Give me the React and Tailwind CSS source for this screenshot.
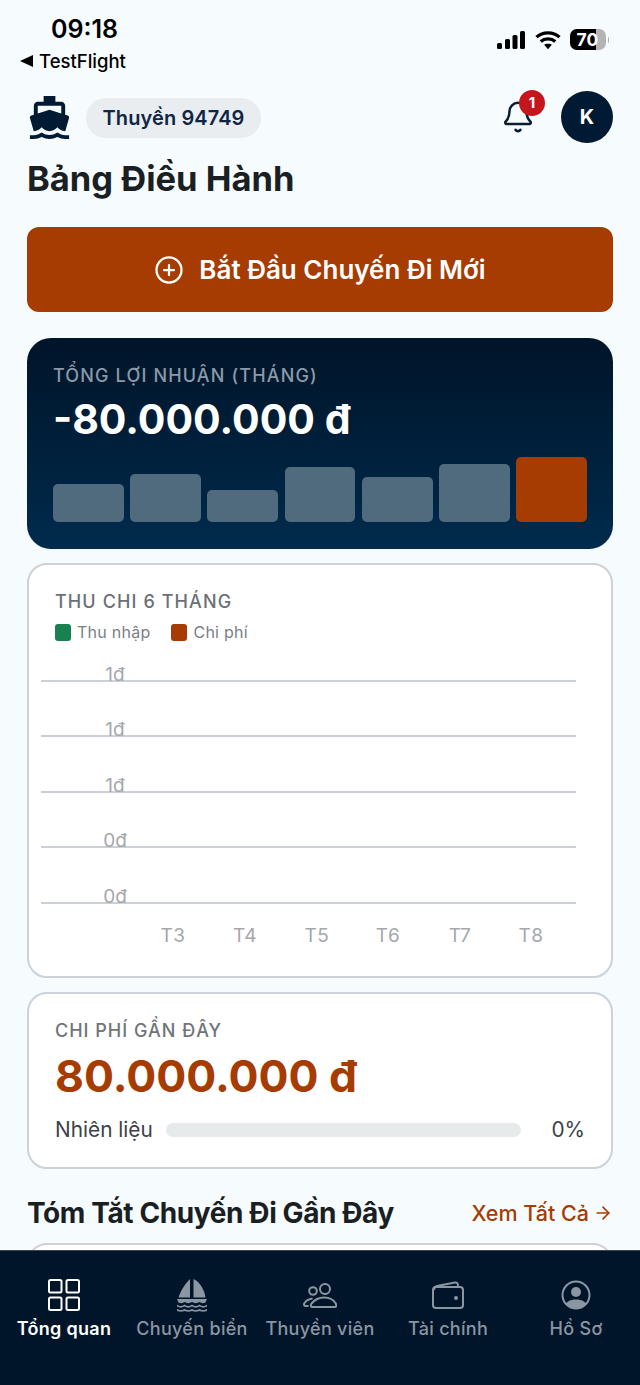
import React from "react";
import { MdDirectionsBoat } from "react-icons/md";
import { Bell, CirclePlus, ArrowRight } from "lucide-react";

const FONT = "font-['Inter','Noto_Sans',sans-serif]";
const bars = [38, 48, 32, 55, 45, 58];
const gridY = [
  { y: 21, l: "1đ" },
  { y: 76, l: "1đ" },
  { y: 132, l: "1đ" },
  { y: 187, l: "0đ" },
  { y: 243, l: "0đ" },
];
const months = [
  ["T3", 172],
  ["T4", 244],
  ["T5", 316],
  ["T6", 387],
  ["T7", 459],
  ["T8", 530],
];

function StatusIcons() {
  return (
    <div className="flex items-center">
      <svg width="28" height="18" viewBox="0 0 28 18" fill="#000" className="mt-[1px]">
        <rect x="0" y="12" width="5" height="6" rx="1.5" />
        <rect x="8" y="8" width="5" height="10" rx="1.5" />
        <rect x="15.500" y="4" width="5" height="14" rx="1.5" />
        <rect x="23" y="0" width="5" height="18" rx="1.5" />
      </svg>
      <svg width="26" height="20" viewBox="0 0 27 20" fill="none" stroke="#000" strokeWidth="3.4" className="ml-[10px]">
        <path d="M1.5 7 C8 1 19 1 25.5 7" />
        <path d="M6 11.5 C10 8 17 8 21 11.5" />
        <path d="M13.5 19.5 L9.5 15 C11.5 13.6 15.5 13.6 17.5 15 Z" fill="#000" stroke="none" />
      </svg>
      <div className="relative ml-[9px] flex h-[21px] w-[36px] overflow-hidden rounded-[7px] bg-[#b4b4b4]">
        <div className="h-full w-[26px] bg-black" />
        <span className="absolute left-[7px] top-0 text-[17.500px] font-bold leading-[21px] text-white">70</span>
      </div>
      <div className="ml-[2px] h-[6px] w-[1.5px] rounded-r-sm bg-[#b4b4b4]" />
    </div>
  );
}

function SailIcon() {
  return (
    <svg width="32" height="34" viewBox="0 0 32 34" fill="#8b96a3">
      <path d="M14 1 V19.500 H2.500 C4.500 13 9 6 14 1 Z" />
      <path d="M17.500 1 C24 4 28.500 12 29.500 19.500 H17.500 Z" />
      <path d="M1 21 H31 L29.500 24.500 C27.500 25.500 26 25.500 23.500 24 C21 25.500 18.500 25.500 16 24 C13.500 25.500 11 25.500 8.500 24 C6 25.500 4.500 25.500 2.500 24.500 Z" />
      <path d="M1 26.500 C4 28.500 6 28.500 8.500 26.500 C11 28.500 13.500 28.500 16 26.500 C18.500 28.500 21 28.500 23.500 26.500 C26 28.500 28 28.500 31 26.500 V28.500 C28 30 26 30 23.500 28.500 C21 30 18.500 30 16 28.500 C13.500 30 11 30 8.500 28.500 C6 30 4 30 1 28.500 Z" />
      <path d="M1 31 C4 32.500 6 32.500 8.500 31 C11 32.500 13.500 32.500 16 31 C18.500 32.500 21 32.500 23.500 31 C26 32.500 28 32.500 31 31 V33 C28 34 26 34 23.500 33 C21 34 18.500 34 16 33 C13.500 34 11 34 8.500 33 C6 34 4 34 1 33 Z" />
    </svg>
  );
}

function GridIcon() {
  return (
    <svg width="32" height="32" viewBox="0 0 32 32" fill="none" stroke="#fff" strokeWidth="2">
      <rect x="1" y="1" width="12.500" height="12.500" rx="1.500" />
      <rect x="18.500" y="1" width="12.500" height="12.500" rx="1.500" />
      <rect x="1" y="18.500" width="12.500" height="12.500" rx="1.500" />
      <rect x="18.500" y="18.500" width="12.500" height="12.500" rx="1.500" />
    </svg>
  );
}

function CrewIcon() {
  return (
    <svg width="34" height="25" viewBox="0 0 34 25" fill="none" stroke="#8b96a3" strokeWidth="2">
      <circle cx="22" cy="6" r="5" />
      <circle cx="10" cy="8" r="3.800" />
      <path d="M9 24 H32 C33.500 24 33.500 22 32.800 20.500 C30.500 16.500 26 14.500 21 14.500 C16 14.500 11.500 17 8.500 20.500 C7.500 22 7.500 24 9 24 Z" />
      <path d="M5.500 23 H3 C1 23 .5 21.500 1.500 20 C3 17.500 6 16 9.500 15.500" />
    </svg>
  );
}

function WalletIcon() {
  return (
    <svg width="32" height="28" viewBox="0 0 32 28" fill="none" stroke="#8b96a3" strokeWidth="2">
      <path d="M2 9 C2 6.500 3 5.500 5 5 L23 1.500 C25 1.200 26 2.500 26 5" />
      <rect x="1" y="6" width="30" height="21" rx="3" />
      <circle cx="24" cy="17" r="2" fill="#8b96a3" stroke="none" />
    </svg>
  );
}

function ProfileIcon() {
  return (
    <svg width="30" height="30" viewBox="0 0 30 30" fill="none">
      <defs>
        <clipPath id="profile-clip">
          <circle cx="15" cy="15" r="13.500" />
        </clipPath>
      </defs>
      <circle cx="15" cy="12" r="5" fill="#8b96a3" />
      <path d="M3 30 C3 22 9 19.500 15 19.500 C21 19.500 27 22 27 30 Z" fill="#8b96a3" clipPath="url(#profile-clip)" />
      <circle cx="15" cy="15" r="13.500" stroke="#8b96a3" strokeWidth="2" />
    </svg>
  );
}

const navItems = [
  { label: "Tổng quan", icon: <GridIcon />, active: true },
  { label: "Chuyến biển", icon: <SailIcon /> },
  { label: "Thuyền viên", icon: <CrewIcon /> },
  { label: "Tài chính", icon: <WalletIcon /> },
  { label: "Hồ Sơ", icon: <ProfileIcon /> },
];

export default function App() {
  return (
    <div className={`${FONT} flex h-[1385px] w-[640px] flex-col overflow-hidden bg-[#f6fbfd] text-[#1a1f24]`}>
      <main className="h-[1250px] shrink-0 overflow-hidden">
        {/* status bar */}
        <div className="flex h-[91px] items-start justify-between pl-[20px] pr-[31px] pt-[14px]">
          <div className="flex flex-col">
            <span className="ml-[31px] text-[25px] font-semibold leading-[30px] text-black">09:18</span>
            <div className="mt-[5px] flex items-center gap-[6px] text-[18.500px] font-medium leading-[24px] text-black">
              <span className="h-0 w-0 border-y-[6px] border-r-[13px] border-y-transparent border-r-black" />
              TestFlight
            </div>
          </div>
          <div className="pt-[15px]">
            <StatusIcons />
          </div>
        </div>

        <div className="px-[27px]">
          {/* header */}
          <div className="flex h-[52px] items-center justify-between">
            <div className="flex items-center gap-[16px]">
              <MdDirectionsBoat size={47} className="-ml-[1px] -mr-[3px] text-[#001a33]" />
              <div className="mt-[1px] flex h-[40px] w-[175px] items-center justify-center rounded-full bg-[#e9edef] text-[20px] font-semibold tracking-[0.1px] text-[#0f2545]">
                Thuyền 94749
              </div>
            </div>
            <div className="flex items-center gap-[26px]">
              <div className="relative">
                <Bell size={34} strokeWidth={1.800} className="text-[#0c1d33]" />
                <span className="absolute -right-[10px] -top-[10px] flex h-[26px] w-[26px] items-center justify-center rounded-full bg-[#c4161c] text-[15px] font-bold text-white">
                  1
                </span>
              </div>
              <div className="flex h-[52px] w-[52px] items-center justify-center rounded-full bg-[#001a33] text-[20px] font-bold text-white">
                K
              </div>
            </div>
          </div>

          <h1 className="mt-[14px] text-[34.500px] font-bold leading-[44px] text-[#1a1f24]">Bảng Điều Hành</h1>

          {/* CTA */}
          <button className="mt-[26px] flex h-[85px] w-[586px] items-center justify-center gap-[15px] rounded-[12px] bg-[#a63c02] text-[26px] font-semibold text-white">
            <CirclePlus size={30} strokeWidth={1.800} />
            Bắt Đầu Chuyến Đi Mới
          </button>

          {/* profit card */}
          <section className="mt-[26px] h-[211px] rounded-[24px] bg-gradient-to-b from-[#001429] to-[#002b4d] px-[26px] pt-[26px]">
            <div className="text-[18px] font-medium leading-[24px] tracking-[1.150px] text-[#8b9aa8]">TỔNG LỢI NHUẬN (THÁNG)</div>
            <div className="mt-[5px] text-[41px] font-bold leading-[52px] text-white">-80.000.000 đ</div>
            <div className="mt-[12px] flex h-[65px] items-end gap-[6.500px]">
              {bars.map((h, i) => (
                <div key={i} style={{ height: h }} className="flex-1 rounded-[5px] bg-[#506a7e]" />
              ))}
              <div className="h-[65px] flex-1 rounded-[5px] bg-[#a63c02]" />
            </div>
          </section>

          {/* chart card */}
          <section className="mt-[14px] h-[415px] rounded-[20px] border-2 border-[#cdd2da] bg-white pt-[25px]">
            <div className="pl-[26px] text-[18px] font-medium leading-[24px] tracking-[1.100px] text-[#6b7078]">THU CHI 6 THÁNG</div>
            <div className="mt-[8px] flex items-center pl-[26px] text-[16px] leading-[20px] tracking-[0.25px] text-[#7a7f87]">
              <span className="mr-[6px] h-[17px] w-[16px] rounded-[3px] bg-[#19804f]" />
              Thu nhập
              <span className="ml-[21px] mr-[6px] h-[17px] w-[16px] rounded-[3px] bg-[#a63c02]" />
              Chi phí
            </div>
            <svg width="582" height="300" viewBox="0 0 582 300" className="mt-[8px] block">
              {gridY.map((g, i) => (
                <g key={i}>
                  <line x1="12" x2="547" y1={g.y + 10} y2={g.y + 10} stroke="#cdd0d6" strokeWidth="2" />
                  <text x="86" y={g.y + 10} textAnchor="middle" fontSize="19" fill="#a5a8ad">{g.l}</text>
                </g>
              ))}
              {months.map(([m, x]) => (
                <text key={m} x={x - 28} y="292" textAnchor="middle" fontSize="19" fill="#a5a8ad" letterSpacing="0.5">{m}</text>
              ))}
            </svg>
          </section>

          {/* expense card */}
          <section className="mt-[14px] h-[177px] rounded-[20px] border-2 border-[#cdd2da] bg-white px-[26px] pt-[26px]">
            <div className="text-[18px] font-medium leading-[22px] tracking-[1px] text-[#6f7479]">CHI PHÍ GẦN ĐÂY</div>
            <div className="mt-[6px] text-[44.500px] font-bold leading-[56px] text-[#a63c02]">80.000.000 đ</div>
            <div className="mt-[12px] flex items-center text-[20.800px] leading-[28px]">
              <span className="w-[111px] text-[#3d4247]">Nhiên liệu</span>
              <div className="h-[14px] w-[355px] rounded-full bg-[#e6eaeb]" />
              <span className="ml-auto text-[#3d4247]">0%</span>
            </div>
          </section>

          {/* section header */}
          <div className="mt-[23px] flex items-center justify-between">
            <h2 className="text-[28px] font-bold leading-[42px] tracking-[-0.4px] text-[#1a1f24]">Tóm Tắt Chuyến Đi Gần Đây</h2>
            <span className="flex items-center gap-[4px] text-[21.500px] font-medium text-[#a63c02]">
              Xem Tất Cả <ArrowRight size={20} strokeWidth={2} />
            </span>
          </div>
          <div className="mt-[9px] h-[40px] rounded-[20px] border-2 border-[#cdd2da] bg-white" />
        </div>
      </main>

      {/* bottom nav */}
      <nav className="flex h-[135px] shrink-0 items-start border-t border-[#3a4654] bg-[#001529] pt-[27px]">
        {navItems.map((n) => (
          <div key={n.label} className="flex w-[128px] flex-col items-center">
            <div className="flex h-[34px] items-center justify-center">{n.icon}</div>
            <span className={`mt-[5px] whitespace-nowrap text-[18px] leading-[24px] tracking-[0.3px] ${n.active ? "font-semibold text-white" : "font-medium text-[#8b96a3]"}`}>
              {n.label}
            </span>
          </div>
        ))}
      </nav>
    </div>
  );
}
